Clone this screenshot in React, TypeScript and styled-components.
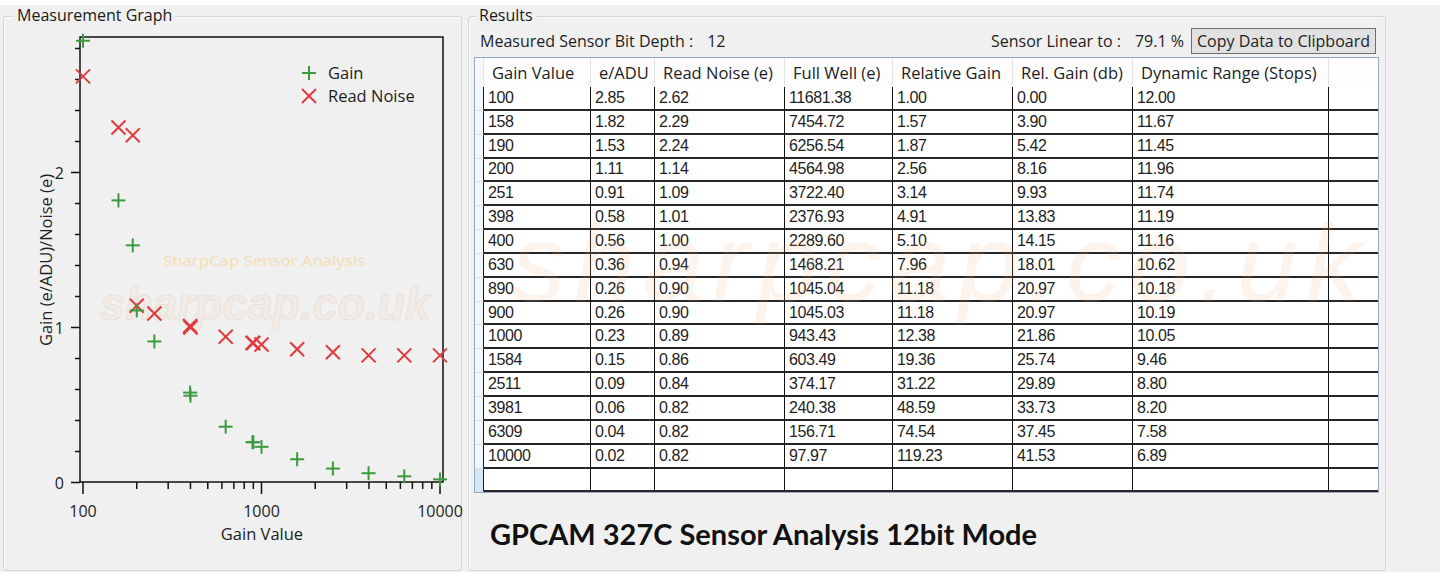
import styled, { createGlobalStyle } from 'styled-components'

const GlobalStyle = createGlobalStyle`
  html, body {
    margin: 0;
    padding: 0;
    background: #ffffff;
  }
  body {
    font-family: 'Open Sans', 'Noto Sans', sans-serif;
    color: #1e1e1e;
  }
`

type Result = {
  gain: number
  eAdu: string
  readNoise: string
  fullWell: string
  relGain: string
  relGainDb: string
  dynamicRange: string
}

const results: Result[] = [
  { gain: 100, eAdu: '2.85', readNoise: '2.62', fullWell: '11681.38', relGain: '1.00', relGainDb: '0.00', dynamicRange: '12.00' },
  { gain: 158, eAdu: '1.82', readNoise: '2.29', fullWell: '7454.72', relGain: '1.57', relGainDb: '3.90', dynamicRange: '11.67' },
  { gain: 190, eAdu: '1.53', readNoise: '2.24', fullWell: '6256.54', relGain: '1.87', relGainDb: '5.42', dynamicRange: '11.45' },
  { gain: 200, eAdu: '1.11', readNoise: '1.14', fullWell: '4564.98', relGain: '2.56', relGainDb: '8.16', dynamicRange: '11.96' },
  { gain: 251, eAdu: '0.91', readNoise: '1.09', fullWell: '3722.40', relGain: '3.14', relGainDb: '9.93', dynamicRange: '11.74' },
  { gain: 398, eAdu: '0.58', readNoise: '1.01', fullWell: '2376.93', relGain: '4.91', relGainDb: '13.83', dynamicRange: '11.19' },
  { gain: 400, eAdu: '0.56', readNoise: '1.00', fullWell: '2289.60', relGain: '5.10', relGainDb: '14.15', dynamicRange: '11.16' },
  { gain: 630, eAdu: '0.36', readNoise: '0.94', fullWell: '1468.21', relGain: '7.96', relGainDb: '18.01', dynamicRange: '10.62' },
  { gain: 890, eAdu: '0.26', readNoise: '0.90', fullWell: '1045.04', relGain: '11.18', relGainDb: '20.97', dynamicRange: '10.18' },
  { gain: 900, eAdu: '0.26', readNoise: '0.90', fullWell: '1045.03', relGain: '11.18', relGainDb: '20.97', dynamicRange: '10.19' },
  { gain: 1000, eAdu: '0.23', readNoise: '0.89', fullWell: '943.43', relGain: '12.38', relGainDb: '21.86', dynamicRange: '10.05' },
  { gain: 1584, eAdu: '0.15', readNoise: '0.86', fullWell: '603.49', relGain: '19.36', relGainDb: '25.74', dynamicRange: '9.46' },
  { gain: 2511, eAdu: '0.09', readNoise: '0.84', fullWell: '374.17', relGain: '31.22', relGainDb: '29.89', dynamicRange: '8.80' },
  { gain: 3981, eAdu: '0.06', readNoise: '0.82', fullWell: '240.38', relGain: '48.59', relGainDb: '33.73', dynamicRange: '8.20' },
  { gain: 6309, eAdu: '0.04', readNoise: '0.82', fullWell: '156.71', relGain: '74.54', relGainDb: '37.45', dynamicRange: '7.58' },
  { gain: 10000, eAdu: '0.02', readNoise: '0.82', fullWell: '97.97', relGain: '119.23', relGainDb: '41.53', dynamicRange: '6.89' },
]

const headers = [
  'Gain Value',
  'e/ADU',
  'Read Noise (e)',
  'Full Well (e)',
  'Relative Gain',
  'Rel. Gain (db)',
  'Dynamic Range (Stops)',
]

const COLUMNS = '9px 107px 64px 130px 108px 120px 120px 196px 1fr'

// chart scale, in window pixels
const xOf = (v: number) => 83 + (Math.log10(v) - 2) * 178.5
const yOf = (v: number) => 482.5 - v * 155

const PLOT = { left: 80, right: 443, top: 37, bottom: 482 }

export default function App() {
  return (
    <>
      <GlobalStyle />
      <Window>
        <GroupBox $width={459}>
          <GroupTitle $inset={10}>Measurement Graph</GroupTitle>
          <MeasurementGraph />
        </GroupBox>

        <GroupBox $width={918}>
          <GroupTitle $inset={7}>Results</GroupTitle>

          <InfoRow>
            <InfoText>
              Measured Sensor Bit Depth :<Value>12</Value>
            </InfoText>
            <InfoRight>
              <InfoText>
                Sensor Linear to :<Value>79.1 %</Value>
              </InfoText>
              <CopyButton>Copy Data to Clipboard</CopyButton>
            </InfoRight>
          </InfoRow>

          <Grid>
            <HeaderRow>
              <HeaderCell $rowHeader />
              {headers.map(h => (
                <HeaderCell key={h}>{h}</HeaderCell>
              ))}
              <HeaderCell $fill />
            </HeaderRow>

            {results.map(r => (
              <DataRow key={r.gain}>
                <RowHeader />
                <Cell>{r.gain}</Cell>
                <Cell>{r.eAdu}</Cell>
                <Cell>{r.readNoise}</Cell>
                <Cell>{r.fullWell}</Cell>
                <Cell>{r.relGain}</Cell>
                <Cell>{r.relGainDb}</Cell>
                <Cell>{r.dynamicRange}</Cell>
                <Cell $fill />
              </DataRow>
            ))}

            <DataRow $newRow>
              <RowHeader $active />
              {headers.map(h => (
                <Cell key={h} />
              ))}
              <Cell $fill />
            </DataRow>

            <GridWatermark>sharpcap.co.uk</GridWatermark>
          </Grid>

          <Caption>GPCAM 327C Sensor Analysis 12bit Mode</Caption>
        </GroupBox>
      </Window>
    </>
  )
}

function Plus({ x, y }: { x: number; y: number }) {
  return (
    <g stroke="#3d9b3d" strokeWidth={2}>
      <line x1={x - 7} y1={y} x2={x + 7} y2={y} />
      <line x1={x} y1={y - 7} x2={x} y2={y + 7} />
    </g>
  )
}

function Cross({ x, y }: { x: number; y: number }) {
  return (
    <g stroke="#e0393e" strokeWidth={2}>
      <line x1={x - 7} y1={y - 7} x2={x + 7} y2={y + 7} />
      <line x1={x - 7} y1={y + 7} x2={x + 7} y2={y - 7} />
    </g>
  )
}

function MeasurementGraph() {
  const yTicks = Array.from({ length: 15 }, (_, i) => i * 0.2)
  const xMinor = [2, 3, 4, 5, 6, 7, 8, 9].flatMap(m => [m * 100, m * 1000])

  return (
    <Chart width={457} height={553}>
      <g transform="translate(-4 -17)">
        <ChartText
          x={163}
          y={266}
          fontSize={15}
          $color="#f3dcae"
          textLength={202}
          lengthAdjust="spacingAndGlyphs"
        >
          SharpCap Sensor Analysis
        </ChartText>
        <WatermarkText x={100} y={320} fontSize={46} textLength={330} lengthAdjust="spacingAndGlyphs">
          sharpcap.co.uk
        </WatermarkText>

        <rect
          x={PLOT.left}
          y={PLOT.top}
          width={PLOT.right - PLOT.left}
          height={PLOT.bottom - PLOT.top}
          fill="none"
          stroke="#111"
          strokeWidth={1.5}
        />

        {yTicks.map((t, i) => {
          const major = i % 5 === 0
          const y = yOf(t)
          return <line key={t} x1={PLOT.left - (major ? 9 : 5)} x2={PLOT.left} y1={y} y2={y} stroke="#111" strokeWidth={1.5} />
        })}
        {[0, 1, 2].map(v => (
          <ChartText key={v} x={64} y={yOf(v) + 6} fontSize={16} textAnchor="end">
            {v}
          </ChartText>
        ))}

        {[100, 1000, 10000].map(v => (
          <line key={v} x1={xOf(v)} x2={xOf(v)} y1={PLOT.bottom} y2={PLOT.bottom + 12} stroke="#111" strokeWidth={1.5} />
        ))}
        {xMinor.map(v => (
          <line key={v} x1={xOf(v)} x2={xOf(v)} y1={PLOT.bottom} y2={PLOT.bottom + 7} stroke="#111" strokeWidth={1.5} />
        ))}
        {[100, 1000, 10000].map(v => (
          <ChartText key={v} x={xOf(v)} y={517} fontSize={16} textAnchor="middle">
            {v}
          </ChartText>
        ))}

        <ChartText x={262} y={540} fontSize={16.5} textAnchor="middle">
          Gain Value
        </ChartText>
        <ChartText
          x={45}
          y={260}
          fontSize={16.5}
          textAnchor="middle"
          dominantBaseline="central"
          transform="rotate(-90 45 260)"
        >
          Gain (e/ADU)/Noise (e)
        </ChartText>

        {results.map(r => (
          <Cross key={`n${r.gain}`} x={xOf(r.gain)} y={yOf(parseFloat(r.readNoise))} />
        ))}
        {results.map(r => (
          <Plus key={`g${r.gain}`} x={xOf(r.gain)} y={yOf(parseFloat(r.eAdu))} />
        ))}

        <Plus x={309} y={73} />
        <ChartText x={328} y={79} fontSize={16.5}>
          Gain
        </ChartText>
        <Cross x={309} y={96} />
        <ChartText x={328} y={102} fontSize={16.5}>
          Read Noise
        </ChartText>
      </g>
    </Chart>
  )
}

const Window = styled.div`
  box-sizing: border-box;
  width: 1440px;
  height: 567px;
  margin-top: 5px;
  padding: 11px 0 1px 3px;
  display: flex;
  gap: 6px;
  background: #f0f0f0;
`

const GroupBox = styled.section<{ $width: number }>`
  box-sizing: border-box;
  width: ${({ $width }) => $width}px;
  height: 555px;
  display: flex;
  flex-direction: column;
  border: 1px solid #d3d6da;
  border-radius: 3px;
  box-shadow: inset 1px 1px 0 #fbfbfb;
`

const GroupTitle = styled.span<{ $inset: number }>`
  align-self: flex-start;
  margin: -11px 0 -7px ${({ $inset }) => $inset}px;
  padding: 0 3px;
  background: #f0f0f0;
  font-size: 16px;
  line-height: 18px;
  color: #1a1a1a;
`

const Chart = styled.svg`
  display: block;
  overflow: visible;
`

const ChartText = styled.text<{ $color?: string }>`
  font-family: 'Open Sans', 'Noto Sans', sans-serif;
  fill: ${({ $color }) => $color ?? '#1e1e1e'};
`

const WatermarkText = styled.text`
  font-family: 'Liberation Sans', Arial, sans-serif;
  font-style: italic;
  font-weight: bold;
  fill: #f0ebe6;
  stroke: #ebe1d8;
  stroke-width: 1;
`

const InfoRow = styled.div`
  height: 26px;
  margin: 11px 9px 0 11px;
  display: flex;
  align-items: center;
  justify-content: space-between;
`

const InfoRight = styled.div`
  display: flex;
  align-items: center;
  gap: 7px;
`

const InfoText = styled.span`
  font-size: 16px;
  color: #1e1e1e;
`

const Value = styled.span`
  margin-left: 14px;
`

const CopyButton = styled.button`
  box-sizing: border-box;
  height: 26px;
  width: 185px;
  padding: 0;
  border: 1px solid #707070;
  background: #e1e1e1;
  font-family: 'Open Sans', 'Noto Sans', sans-serif;
  font-size: 16px;
  white-space: nowrap;
  color: #1e1e1e;
`

const Grid = styled.div`
  position: relative;
  overflow: hidden;
  box-sizing: border-box;
  width: 905px;
  margin: 3px 0 0 5px;
  border: 1px solid #97a8bc;
  background: #ffffff;
`

const HeaderRow = styled.div`
  display: grid;
  grid-template-columns: ${COLUMNS};
  height: 29px;
  background: #fdfdfd;
`

const HeaderCell = styled.div<{ $rowHeader?: boolean; $fill?: boolean }>`
  box-sizing: border-box;
  padding-left: 8px;
  display: flex;
  align-items: center;
  font-size: 16.5px;
  white-space: nowrap;
  overflow: hidden;
  color: #1e1e1e;
  border-right: ${({ $fill }) => ($fill ? 'none' : '1px solid #e4e4e4')};
  background: ${({ $rowHeader }) => ($rowHeader ? '#f6f8fa' : 'transparent')};
`

const DataRow = styled.div<{ $newRow?: boolean }>`
  display: grid;
  grid-template-columns: ${COLUMNS};
  height: ${({ $newRow }) => ($newRow ? '23px' : '23.85px')};
`

const RowHeader = styled.div<{ $active?: boolean }>`
  box-sizing: border-box;
  border-right: 1px solid #1a1a1a;
  border-bottom: 1px solid #d6dee8;
  background: ${({ $active }) => ($active ? '#d5e6f7' : '#f3f6f9')};
`

const Cell = styled.div<{ $fill?: boolean }>`
  box-sizing: border-box;
  padding-left: 4px;
  display: flex;
  align-items: center;
  font-family: 'Liberation Sans', Arial, sans-serif;
  font-size: 16px;
  letter-spacing: -0.4px;
  color: #1e1e1e;
  border-bottom: 2px solid #262626;
  border-right: ${({ $fill }) => ($fill ? 'none' : '1px solid #111')};
`

const GridWatermark = styled.div`
  position: absolute;
  left: 36px;
  top: 150px;
  font-family: 'Liberation Sans', Arial, sans-serif;
  font-style: italic;
  font-size: 110px;
  line-height: 110px;
  letter-spacing: 8px;
  color: rgba(236, 170, 120, 0.14);
  pointer-events: none;
  white-space: nowrap;
`

const Caption = styled.div`
  margin: 25px 0 0 21px;
  font-family: Lato, 'Open Sans', sans-serif;
  font-weight: bold;
  font-size: 29px;
  line-height: 32px;
  color: #111;
`
